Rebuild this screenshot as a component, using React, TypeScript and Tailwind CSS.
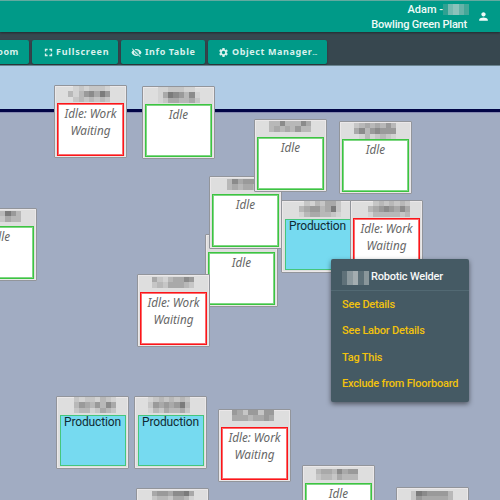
import type { ReactNode } from 'react';

type Status = 'waiting' | 'idle' | 'production';

interface Station {
  x: number;
  y: number;
  status: Status;
  mask: string[];
  mx: number;
  my: number;
}

const stations: Station[] = [
  { x: 54, y: 85, status: 'waiting', mx: 14, my: 1, mask: [' 1212221', '31356475', ' 2323232'] },
  { x: 142, y: 86, status: 'idle', mx: 15.5, my: 0, mask: ['1122211 ', '14765361', '12443342'] },
  { x: 281, y: 200, status: 'production', mx: 18, my: 1, mask: [' 2132442', '34553472', '13443321'] },
  { x: 350, y: 200, status: 'waiting', mx: 18, my: 1, mask: [' 2323232', '34565464', '13333323'] },
  { x: 339, y: 121, status: 'idle', mx: 15, my: 2, mask: ['23434353', '46356555', ' 1312321'] },
  { x: 205, y: 234, status: 'idle', mx: 15, my: 2, mask: [] },
  { x: 209, y: 176, status: 'idle', mx: 18, my: 3, mask: ['36455544', '34344333'] },
  { x: 254, y: 119, status: 'idle', mx: 15, my: 2, mask: ['33633364', '34343533'] },
  { x: 137, y: 274, status: 'waiting', mx: 15, my: 3, mask: ['42134465', '23244432'] },
  { x: -36, y: 208, status: 'idle', mx: 15, my: 3, mask: ['22433753', '33322433'] },
  { x: 56, y: 396, status: 'production', mx: 18, my: 1, mask: ['21221321', '35435364', '23312432'] },
  { x: 134, y: 396, status: 'production', mx: 14, my: 1, mask: ['12323232', '25454573', '13243342'] },
  { x: 218, y: 409, status: 'waiting', mx: 14, my: 1, mask: ['54255255', '44434454'] },
  { x: 302, y: 465, status: 'idle', mx: 14, my: 4, mask: ['34436455', '23324333'] },
  { x: 136, y: 488, status: 'idle', mx: 16, my: 3, mask: ['45546674', '23324431'] },
  { x: 396, y: 487, status: 'idle', mx: 15, my: 4, mask: ['27655553', '25444443'] },
];

const shades = ['#e0e0e0', '#d3d3d3', '#c6c6c6', '#b8b8b8', '#a9a9a9', '#9a9a9a', '#8b8b8b', '#7b7b7b'];

function Mosaic({ rows }: { rows: string[] }) {
  return (
    <div className="blur-[0.4px]">
      {rows.map((row, r) => (
        <div key={r} className="flex">
          {row.split('').map((cell, c) => (
            <span
              key={c}
              className="h-[5.3px] w-[5.3px]"
              style={{ background: cell === ' ' ? 'transparent' : shades[Number(cell)] }}
            />
          ))}
        </div>
      ))}
    </div>
  );
}

const boxStyles: Record<Status, string> = {
  waiting: 'h-[53px] w-[67px] border border-[#fc1519] bg-white shadow-[inset_0_0_0_1px_#fb6c6e] italic text-[#666666]',
  idle: 'h-[53px] w-[67px] border border-[#3cc441] bg-white shadow-[inset_0_0_0_1px_#80d784] italic text-[#666666]',
  production: 'mt-px h-[51px] w-[66px] border border-[#45c67c] bg-[#76daf0] text-[#0f2a33]',
};

function StationCard({ station }: { station: Station }) {
  const production = station.status === 'production';
  return (
    <div
      className="absolute h-[73px] w-[73px] rounded-[1px] border border-[#92959b] bg-[#dedede] shadow-[inset_0_0_0_1px_#ebe8e9]"
      style={{ left: station.x, top: station.y }}
    >
      <div className="h-[17px]" style={{ paddingLeft: station.mx - 1, paddingTop: Math.max(0, station.my - 1) }}>
        <Mosaic rows={station.mask} />
      </div>
      <div className={`relative mx-auto text-center ${boxStyles[station.status]}`}>
        {production ? (
          <div className="font-[Roboto,sans-serif] text-[12px] leading-[13px] tracking-[-0.15px] whitespace-nowrap">Production</div>
        ) : (
          <div className="pt-[0.5px] font-['Noto_Sans',sans-serif] text-[11.7px] leading-[17.2px]">
            {station.status === 'waiting' ? (
              <>
                Idle: Work
                <br />
                Waiting
              </>
            ) : (
              'Idle'
            )}
          </div>
        )}
      </div>
    </div>
  );
}

function ToolButton({ className, icon, children }: { className: string; icon?: ReactNode; children: ReactNode }) {
  return (
    <button
      className={`flex h-6 shrink-0 items-center rounded-[2px] bg-[#009a88] font-['Noto_Sans',sans-serif] text-[9px] font-bold tracking-[0.6px] whitespace-nowrap text-[#d9f1ed] shadow-[0_1px_2px_rgba(0,0,0,0.35)] ${className}`}
    >
      {icon}
      <span>{children}</span>
    </button>
  );
}

function Icon({ path, className }: { path: string; className: string }) {
  return (
    <svg viewBox="0 0 24 24" fill="currentColor" className={className}>
      <path d={path} />
    </svg>
  );
}

const icons = {
  fullscreen: 'M7 14H4v6h6v-3H7zM4 10h3V7h3V4H4zM17 17h-3v3h6v-6h-3zM14 4v3h3v3h3V4z',
  hidden:
    'M12 7c2.76 0 5 2.24 5 5 0 .65-.13 1.26-.36 1.83l2.92 2.92c1.51-1.26 2.7-2.89 3.43-4.75-1.73-4.39-6-7.5-11-7.5-1.4 0-2.74.25-3.98.7l2.16 2.16C10.74 7.13 11.35 7 12 7zM2 4.27l2.28 2.28.46.46C3.08 8.3 1.78 10.02 1 12c1.73 4.39 6 7.5 11 7.5 1.55 0 3.03-.3 4.38-.84l.42.42L19.73 22 21 20.73 3.27 3 2 4.27zM7.53 9.8l1.55 1.55c-.05.21-.08.43-.08.65 0 1.66 1.34 3 3 3 .22 0 .44-.03.65-.08l1.55 1.55c-.67.33-1.41.53-2.2.53-2.76 0-5-2.24-5-5 0-.79.2-1.53.53-2.2zm4.31-.78l3.15 3.15.02-.16c0-1.66-1.34-3-3-3l-.17.01z',
  gear: 'M19.14 12.94c.04-.3.06-.61.06-.94s-.02-.64-.07-.94l2.03-1.58c.18-.14.23-.41.12-.61l-1.92-3.32c-.12-.22-.37-.29-.59-.22l-2.39.96c-.5-.38-1.03-.7-1.62-.94l-.36-2.54A.48.48 0 0 0 13.92 2h-3.84c-.24 0-.43.17-.47.41l-.36 2.54c-.59.24-1.13.57-1.62.94l-2.39-.96c-.22-.08-.47 0-.59.22L2.74 8.87c-.12.21-.08.47.12.61l2.03 1.58c-.05.3-.09.63-.09.94s.02.64.07.94l-2.03 1.58c-.18.14-.23.41-.12.61l1.92 3.32c.12.22.37.29.59.22l2.39-.96c.5.38 1.03.7 1.62.94l.36 2.54c.05.24.24.41.48.41h3.84c.24 0 .44-.17.47-.41l.36-2.54c.59-.24 1.13-.56 1.62-.94l2.39.96c.22.08.47 0 .59-.22l1.92-3.32c.12-.22.07-.47-.12-.61zM12 15.6a3.6 3.6 0 1 1 0-7.2 3.6 3.6 0 0 1 0 7.2z',
  person: 'M12 12c2.21 0 4-1.79 4-4s-1.79-4-4-4-4 1.79-4 4 1.79 4 4 4zm0 2c-2.67 0-8 1.34-8 4v2h16v-2c0-2.66-5.33-4-8-4z',
};

const menuItems = ['See Details', 'See Labor Details', 'Tag This', 'Exclude from Floorboard'];
const userMask = ['#2fa192', '#74b9b0', '#8cc2bb', '#66b2a8', '#43a798'];
const menuMask = ['#5f7179', '#8c999e', '#a4adb0', '#5d7078', '#89969a'];

export default function App() {
  return (
    <div className="flex h-[500px] w-[500px] flex-col overflow-hidden bg-[#a1acc2]">
      <header className="relative z-10 flex h-8 shrink-0 justify-end border-t border-[#62aaa0] bg-[#009a88] font-[Roboto,sans-serif] text-[11px] font-medium tracking-[-0.2px] text-[#f0faf8] shadow-[0_1px_2px_rgba(0,0,0,0.4)]">
        <div className="flex w-[97px] flex-col items-end leading-[15.5px] whitespace-nowrap">
          <div className="flex items-center pt-px">
            <span className="tracking-[0px]">Adam -</span>
            <span className="-mr-[2px] flex h-[11px] w-[26px] blur-[0.5px]">
              {userMask.map((color, i) => (
                <span key={i} className="h-full flex-1" style={{ background: color }} />
              ))}
            </span>
          </div>
          <span className="-mt-[0.5px]">Bowling Green Plant</span>
        </div>
        <Icon path={icons.person} className="mt-[9px] mr-[10px] ml-[10px] h-[13px] w-[13px]" />
      </header>

      <nav className="flex h-[34px] shrink-0 gap-[3px] overflow-hidden border-b border-[#6a8490] bg-[#37474f] pt-2">
        <ToolButton className="-ml-8 w-[61px] justify-end pr-[10px]">Zoom</ToolButton>
        <ToolButton
          className="w-[86px] gap-[2px] pl-[11px] tracking-[0.75px]"
          icon={<Icon path={icons.fullscreen} className="h-[11px] w-[11px]" />}
        >
          Fullscreen
        </ToolButton>
        <ToolButton
          className="w-[84px] gap-[3px] pl-[10px]"
          icon={<Icon path={icons.hidden} className="h-[11px] w-[11px]" />}
        >
          Info Table
        </ToolButton>
        <ToolButton
          className="w-[119px] gap-[3px] pl-[10px]"
          icon={<Icon path={icons.gear} className="h-[11px] w-[11px]" />}
        >
          Object Manager<span className="text-[7px] font-normal tracking-[-0.3px]">...</span>
        </ToolButton>
      </nav>

      <main className="relative min-h-0 flex-1">
        <div className="h-[46px] border-b-[3px] border-[#020546] bg-[#b1cce6]" />
        <div className="h-px bg-[#8689b0]" />
        <div className="absolute -top-[66px] left-0">
          {stations.map((station, i) => (
            <StationCard key={i} station={station} />
          ))}
        </div>

        <section className="absolute top-[193px] left-[331px] h-[143px] w-[138px] rounded-[2px] bg-[#455a64] font-[Roboto,sans-serif] text-[11px] font-medium tracking-[-0.2px] shadow-[0_2px_5px_rgba(0,0,0,0.5)]">
          <header className="flex h-8 items-center border-b border-[#526973] pt-[6px] pl-[11px] text-[#f7f8f8]">
            <span className="mr-[2px] flex h-[14px] w-[27px] blur-[0.5px]">
              {menuMask.map((color, i) => (
                <span key={i} className="h-full flex-1" style={{ background: color }} />
              ))}
            </span>
            <span className="whitespace-nowrap">Robotic Welder</span>
          </header>
          <ul className="pt-px pl-[11px] leading-[26.4px] whitespace-nowrap text-[#f2c20d]">
            {menuItems.map((item) => (
              <li key={item}>{item}</li>
            ))}
          </ul>
        </section>
      </main>
    </div>
  );
}
